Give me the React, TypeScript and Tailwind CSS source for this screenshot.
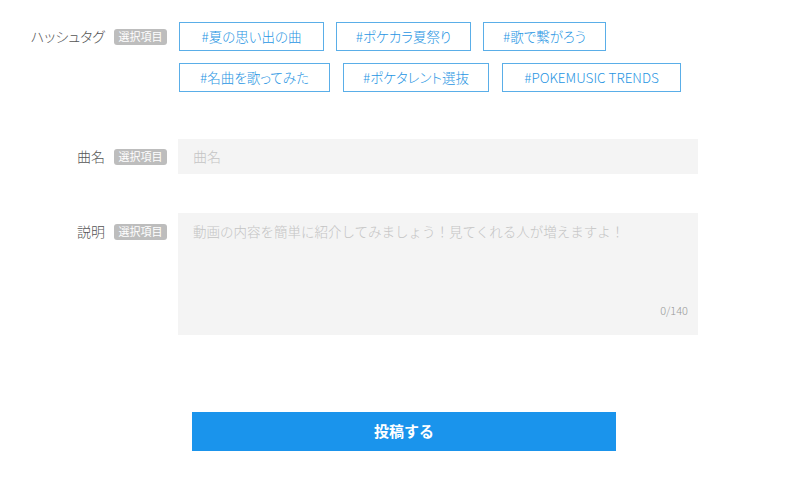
import React from "react";

const font = { fontFamily: '"Noto Sans CJK JP", "Noto Sans", sans-serif' };
const palt = { fontFeatureSettings: '"palt"' };

function Badge() {
  return (
    <span className="flex h-[16px] w-[53px] shrink-0 items-center justify-center rounded-[3px] bg-[#bdbdbd] text-[11px] leading-none text-white">
      選択項目
    </span>
  );
}

function Label({ text }: { text: string }) {
  return (
    <div className="flex w-[167px] shrink-0 items-center justify-end gap-[9px]">
      <span className="text-[14px] font-light text-[#555]" style={palt}>
        {text}
      </span>
      <Badge />
    </div>
  );
}

const row1 = [
  { t: "#夏の思い出の曲", w: "w-[145px]" },
  { t: "#ポケカラ夏祭り", w: "w-[135px]" },
  { t: "#歌で繋がろう", w: "w-[123px]" },
];
const row2 = [
  { t: "#名曲を歌ってみた", w: "w-[151px]" },
  { t: "#ポケタレント選抜", w: "w-[146px]" },
  { t: "#POKEMUSIC TRENDS", w: "w-[179px]" },
];

function Tag({ t, w }: { t: string; w: string }) {
  return (
    <button
      className={`flex h-[29px] ${w} items-center justify-center border border-[#5aaee8] bg-white text-[13.5px] font-light text-[#2795e3]`}
      style={palt}
    >
      {t}
    </button>
  );
}

export default function App() {
  return (
    <div className="min-h-[498px] w-[800px] bg-white" style={font}>
      <div className="pt-[22px]">
        {/* hashtag picker */}
        <div className="flex gap-[12px]">
          <div className="flex h-[29px] items-center">
            <Label text="ハッシュタグ" />
          </div>
          <div className="flex flex-col gap-[12px]">
            <div className="flex gap-[12px]">
              {row1.map((r) => (
                <Tag key={r.t} {...r} />
              ))}
            </div>
            <div className="flex gap-[13px]">
              {row2.map((r) => (
                <Tag key={r.t} {...r} />
              ))}
            </div>
          </div>
        </div>

        {/* song title */}
        <div className="mt-[47px] flex items-center gap-[11px]">
          <Label text="曲名" />
          <div className="flex h-[35px] w-[520px] items-center bg-[#f4f4f4] px-[15px] text-[14px] font-light text-[#c4c4c4]">
            曲名
          </div>
        </div>

        {/* description */}
        <div className="mt-[39px] flex gap-[11px]">
          <div className="pt-[8px]">
            <Label text="説明" />
          </div>
          <div className="relative h-[122px] w-[520px] bg-[#f4f4f4] px-[15px] pt-[8px] text-[13.5px] font-light text-[#c4c4c4]">
            動画の内容を簡単に紹介してみましょう！見てくれる人が増えますよ！
            <span className="absolute bottom-[17px] right-[10px] text-[11px] text-[#999]">0/140</span>
          </div>
        </div>

        {/* submit */}
        <div className="mt-[77px] pl-[192px]">
          <button className="flex h-[39px] w-[424px] items-center justify-center bg-[#1a94ec] text-[15px] font-bold text-white">
            投稿する
          </button>
        </div>
      </div>
    </div>
  );
}
